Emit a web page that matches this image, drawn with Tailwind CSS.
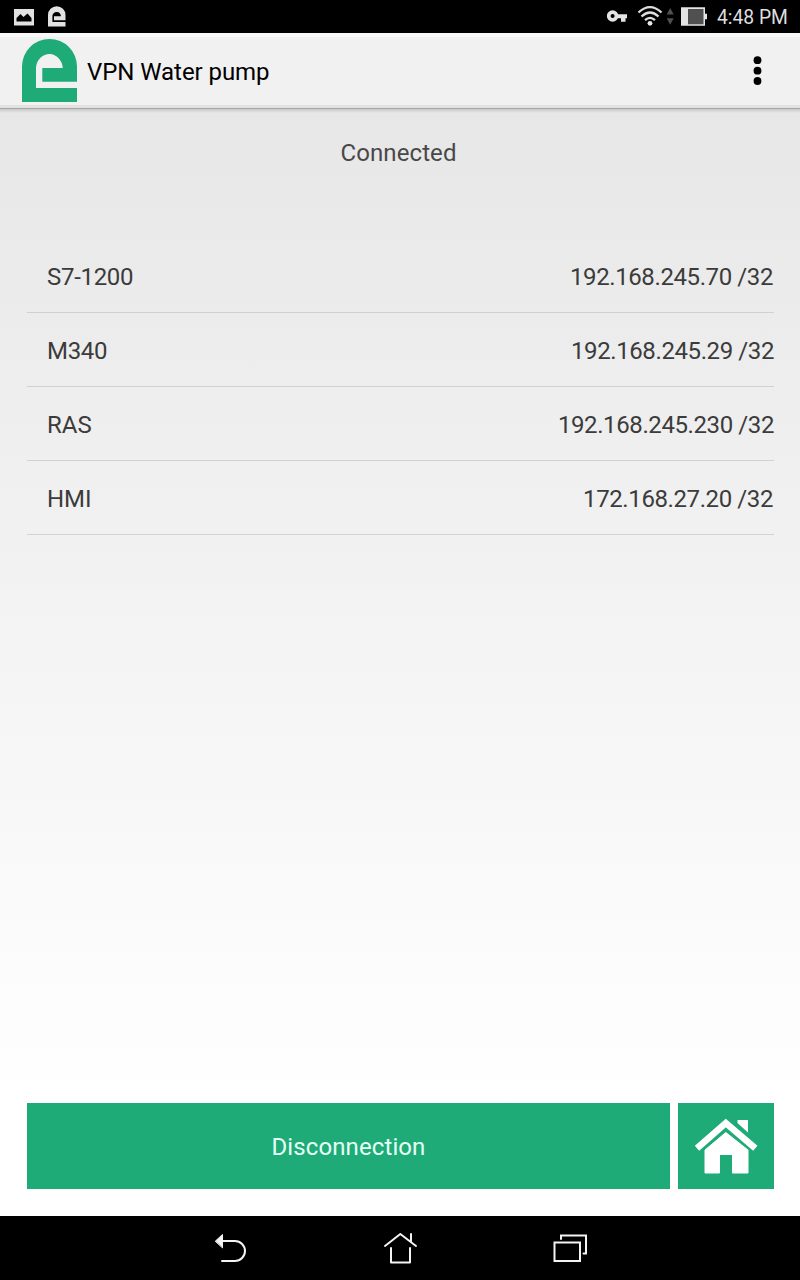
<!DOCTYPE html>
<html lang="en">
<head>
<meta charset="utf-8">
<title>VPN Water pump</title>
<script src="https://cdn.jsdelivr.net/npm/@tailwindcss/browser@4"></script>
</head>
<body class="flex h-[1280px] w-[800px] flex-col overflow-hidden bg-black font-['Roboto',sans-serif] text-2xl text-[#3b3b3b]">
  <header class="flex h-[33px] shrink-0 items-center bg-black text-[#dedede]">
    <svg class="ml-3.5 h-[33px] w-5" viewBox="14 0 20 33"><path fill="#e2e2e2" fill-rule="evenodd" d="M14 9H34V25.500H14ZM16.500 21.500H31.500V18L27.500 13.500L23.500 17L20.500 14L16.500 18Z"/></svg>
    <svg class="ml-3.5 h-[33px] w-[18px]" viewBox="48 0 18 33"><path fill="#e2e2e2" d="M48 26.500V15A8.700 8.700 0 0 1 65.500 15V20.300H54V16.200H61A4.400 4.800 0 0 0 52.400 15.500V22H65.500V26.500Z"/></svg>
    <svg class="ml-auto h-[33px] w-[104px]" viewBox="604 0 104 33">
      <path fill="none" stroke="#e4e4e4" stroke-width="3.700" d="M616.500 16A3.900 3.900 0 1 0 608.700 16A3.900 3.900 0 1 0 616.500 16"/>
      <path fill="#e4e4e4" d="M617 14.300H627V18.300H625.500V21.700H621V18.300H617Z"/>
      <g fill="none" stroke="#dedede" stroke-width="2.300"><path d="M638.500 12.500Q650 1.800 661.500 12.500"/><path d="M641.500 16.500Q650 8.500 658.500 16.500"/><path d="M645 20.200Q650 15.500 655 20.200"/></g>
      <circle cx="650" cy="23.300" r="2.400" fill="#e8e8e8"/>
      <path fill="#505050" d="M666.700 14.500L670.200 8L673.700 14.500ZM666.700 18.300H673.700L670.200 24.800Z"/>
      <path fill="#e4e4e4" d="M681 7.300H705V13.800H707V19.300H705V25.800H681Z"/>
      <path fill="#505050" d="M688 9H703.500V24.300H688Z"/>
    </svg>
    <span class="ml-[9px] mr-3 mt-0.5 w-[71px] whitespace-nowrap text-[19.300px] leading-none">4:48 PM</span>
  </header>
  <nav class="flex h-[76px] shrink-0 items-center border-b border-[#a5a5a5] bg-[#f1f1f1] text-black shadow-[inset_0_4px_0_#f8f8f8,inset_0_-3px_0_#e2e2e2]">
    <svg class="ml-[22px] h-[75px] w-[55px]" viewBox="22 33 55 75"><path fill="#1eab78" d="M22 102V66.500A27.500 27.500 0 0 1 77 66.500V81.800H42.300V68H62.800A13.500 15.200 0 0 0 36 67V88H77V102Z"/></svg>
    <h1 class="ml-2.5 mt-[3px] whitespace-nowrap text-2xl tracking-[-0.06px]">VPN Water pump</h1>
    <svg class="ml-auto mr-[38px] h-[75px] w-[9px]" viewBox="753 33 9 75"><g fill="#000"><circle cx="757.500" cy="60.200" r="3.900"/><circle cx="757.500" cy="70.700" r="3.900"/><circle cx="757.500" cy="81" r="3.900"/></g></svg>
  </nav>
  <main class="flex h-[1107px] shrink-0 flex-col bg-linear-to-b from-[#e7e7e7] to-white to-90% pb-[27px]">
    <div class="h-1 shrink-0 bg-linear-to-b from-[#c9c9c9] to-[#e7e7e7]"></div>
    <p class="mt-6 h-8 pr-[3px] text-center leading-8 tracking-[0.1px] text-[#484848]">Connected</p>
    <ul class="mt-[70px] ml-[27px] mr-[26px] tracking-[-0.4px]">
      <li class="flex h-[74px] items-center justify-between border-b border-[#d0d0d0] pt-0.5 pl-5"><span class="tracking-[-0.3px]">S7-1200</span><span class="mr-px">192.168.245.70 /32</span></li>
      <li class="flex h-[74px] items-center justify-between border-b border-[#d1d1d1] pt-0.5 pl-5"><span class="tracking-[-0.3px]">M340</span><span>192.168.245.29 /32</span></li>
      <li class="flex h-[74px] items-center justify-between border-b border-[#d2d2d2] pt-0.5 pl-5"><span class="tracking-normal">RAS</span><span>192.168.245.230 /32</span></li>
      <li class="flex h-[74px] items-center justify-between border-b border-[#d3d3d3] pt-0.5 pl-5"><span class="tracking-normal">HMI</span><span class="mr-px">172.168.27.20 /32</span></li>
    </ul>
    <div class="mt-auto mr-[26px] ml-[27px] flex h-[86px] gap-2">
      <button class="flex-1 bg-[#1eab78] pt-0.5 tracking-[0.1px] text-[#e6fff4]">Disconnection</button>
      <button class="w-24 bg-[#1eab78]" aria-label="Home">
        <svg class="block h-[86px] w-24" viewBox="678 1103 96 86">
          <path fill="none" stroke="#fff" stroke-width="6.600" stroke-linejoin="miter" d="M697 1148.300L725.800 1123L755.300 1148.300"/>
          <path fill="#fff" stroke="#fff" stroke-linejoin="round" stroke-width="1" d="M705 1150L725.800 1132.500L748 1150V1173H732.500V1154.500H719.500V1173H705Z"/>
          <path fill="#fff" d="M737.500 1120H748V1132.500L737.500 1123Z"/>
        </svg>
      </button>
    </div>
  </main>
  <footer class="flex h-16 shrink-0 items-center">
    <svg class="h-16 w-[800px]" viewBox="0 1216 800 64" fill="none" stroke="#f4f4f4" stroke-width="2" stroke-linecap="round" stroke-linejoin="round">
      <path d="M222 1241H235A10 10 0 0 1 235 1261H222"/><path fill="#f4f4f4" stroke-width="1" d="M215.500 1241L222.500 1234.500V1247.500Z"/>
      <path d="M385 1246L400.300 1234L416 1246M411 1234V1241.500M391 1248V1262.500H410V1248"/>
      <path stroke-linejoin="miter" d="M554.500 1242.500H580V1261H554.500ZM561 1239V1235.500H586V1253.500H583.500"/>
    </svg>
  </footer>
</body>
</html>
